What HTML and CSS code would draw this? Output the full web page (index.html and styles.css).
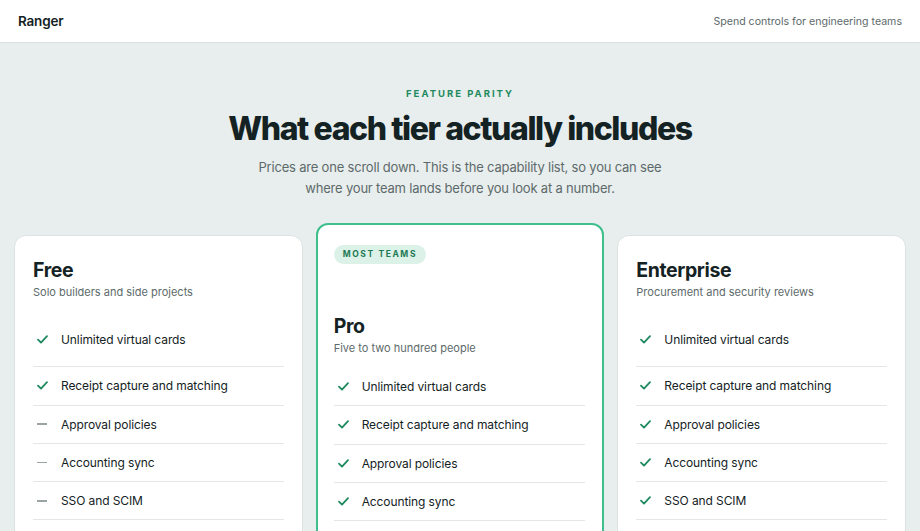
FILE: index.html
```html
<!DOCTYPE html>
<html>
<head>
    <title>Ranger - Feature parity</title>
    <meta name='viewport' content='width=device-width, initial-scale=1'>
    <link rel="stylesheet" href="styles.css">
</head>
<body>
    <header class="topbar">
        <span class="brand">Ranger</span>
        <span class="tagline">Spend controls for engineering teams</span>
    </header>

    <section class="intro">
        <p class="eyebrow">FEATURE PARITY</p>
        <h1>What each tier actually includes</h1>
        <p class="lede">Prices are one scroll down. This is the capability list, so you can see where your team lands before you look at a number.</p>
    </section>

    <section class="tiers">
        <div class="tier">
            <h2>Free</h2>
            <p class="tier-sub">Solo builders and side projects</p>
            <ul class="features">
                <li class="first"><span class="mark yes"><svg width="11" height="9" viewBox="0 0 11 9"><polyline points="1,4.6 4,7.6 10,1.2" /></svg></span>Unlimited virtual cards</li>
                <li><span class="mark yes"><svg width="11" height="9" viewBox="0 0 11 9"><polyline points="1,4.6 4,7.6 10,1.2" /></svg></span>Receipt capture and matching</li>
                <li><span class="mark no"></span>Approval policies</li>
                <li><span class="mark no"></span>Accounting sync</li>
                <li><span class="mark no"></span>SSO and SCIM</li>
            </ul>
        </div>

        <div class="tier featured">
            <span class="badge">MOST TEAMS</span>
            <h2>Pro</h2>
            <p class="tier-sub">Five to two hundred people</p>
            <ul class="features">
                <li><span class="mark yes"><svg width="11" height="9" viewBox="0 0 11 9"><polyline points="1,4.6 4,7.6 10,1.2" /></svg></span>Unlimited virtual cards</li>
                <li><span class="mark yes"><svg width="11" height="9" viewBox="0 0 11 9"><polyline points="1,4.6 4,7.6 10,1.2" /></svg></span>Receipt capture and matching</li>
                <li><span class="mark yes"><svg width="11" height="9" viewBox="0 0 11 9"><polyline points="1,4.6 4,7.6 10,1.2" /></svg></span>Approval policies</li>
                <li><span class="mark yes"><svg width="11" height="9" viewBox="0 0 11 9"><polyline points="1,4.6 4,7.6 10,1.2" /></svg></span>Accounting sync</li>
            </ul>
        </div>

        <div class="tier">
            <h2>Enterprise</h2>
            <p class="tier-sub">Procurement and security reviews</p>
            <ul class="features">
                <li class="first"><span class="mark yes"><svg width="11" height="9" viewBox="0 0 11 9"><polyline points="1,4.6 4,7.6 10,1.2" /></svg></span>Unlimited virtual cards</li>
                <li><span class="mark yes"><svg width="11" height="9" viewBox="0 0 11 9"><polyline points="1,4.6 4,7.6 10,1.2" /></svg></span>Receipt capture and matching</li>
                <li><span class="mark yes"><svg width="11" height="9" viewBox="0 0 11 9"><polyline points="1,4.6 4,7.6 10,1.2" /></svg></span>Approval policies</li>
                <li><span class="mark yes"><svg width="11" height="9" viewBox="0 0 11 9"><polyline points="1,4.6 4,7.6 10,1.2" /></svg></span>Accounting sync</li>
                <li><span class="mark yes"><svg width="11" height="9" viewBox="0 0 11 9"><polyline points="1,4.6 4,7.6 10,1.2" /></svg></span>SSO and SCIM</li>
            </ul>
        </div>
    </section>
</body>
</html>
```

FILE: styles.css
```css
html, body {
    margin: 0;
    padding: 0;
}
body {
    font-family: Inter, "Noto Sans", sans-serif;
    background-color: #e8eeed;
    color: #142224;
    overflow: hidden;
}
.topbar {
    display: flex;
    justify-content: space-between;
    align-items: center;
    height: 42px;
    padding: 0 18px;
    background-color: #ffffff;
    border-bottom: 1px solid #d9e0df;
}
.brand {
    font-size: 13.5px;
    font-weight: 600;
    letter-spacing: -0.2px;
}
.tagline {
    font-size: 10.6px;
    color: #5d6a6b;
}
.intro {
    text-align: center;
    padding-top: 44px;
}
.eyebrow {
    margin: 0;
    font-size: 9.5px;
    line-height: 14px;
    font-weight: 700;
    letter-spacing: 2px;
    color: #1f8a5f;
}
h1 {
    margin: 8px 0 0;
    font-size: 32px;
    line-height: 40px;
    font-weight: 800;
    letter-spacing: -1.4px;
}
.lede {
    margin: 8px auto 0;
    max-width: 420px;
    font-size: 13px;
    line-height: 21px;
    letter-spacing: -0.2px;
    color: #5d6a6b;
}
.tiers {
    display: grid;
    grid-template-columns: repeat(3, 1fr);
    gap: 13px;
    align-items: start;
    padding: 0 14px;
    margin-top: 24px;
}
.tier {
    margin-top: 12px;
    padding: 22px 18px 40px;
    background-color: #ffffff;
    border: 1px solid #dce3e2;
    border-radius: 12px;
}
.tier.featured {
    margin-top: 0;
    padding: 16px 17px 40px 16px;
    border: 2px solid #3fbf8c;
}
.badge {
    display: inline-block;
    height: 19px;
    line-height: 19px;
    padding: 0 9px;
    border-radius: 10px;
    background-color: #dcf1e7;
    color: #1f7a55;
    font-size: 8.5px;
    font-weight: 700;
    letter-spacing: 1.6px;
    margin-bottom: 50px;
}
h2 {
    margin: 0;
    font-size: 19.5px;
    line-height: 24px;
    font-weight: 700;
    letter-spacing: -0.4px;
}
.tier-sub {
    margin: 2px 0 0;
    font-size: 11px;
    line-height: 17px;
    color: #5d6a6b;
}
.features {
    list-style: none;
    margin: 11px 0 0;
    padding: 0;
}
.features li {
    display: flex;
    align-items: center;
    padding: 10px 0;
    line-height: 17.3px;
    font-size: 12px;
    letter-spacing: -0.1px;
    border-bottom: 1px solid #e3e8e7;
}
.features li.first {
    padding: 18.5px 0;
}
.mark {
    width: 28px;
    flex-shrink: 0;
    display: flex;
    align-items: center;
    padding-left: 4px;
    box-sizing: border-box;
}
.mark svg {
    display: block;
    fill: none;
    stroke: #1f8a5f;
    stroke-width: 1.8;
    stroke-linecap: round;
    stroke-linejoin: round;
}
.mark.no::before {
    content: "";
    display: block;
    width: 10px;
    height: 1.5px;
    background-color: #9aa4a4;
}
```
